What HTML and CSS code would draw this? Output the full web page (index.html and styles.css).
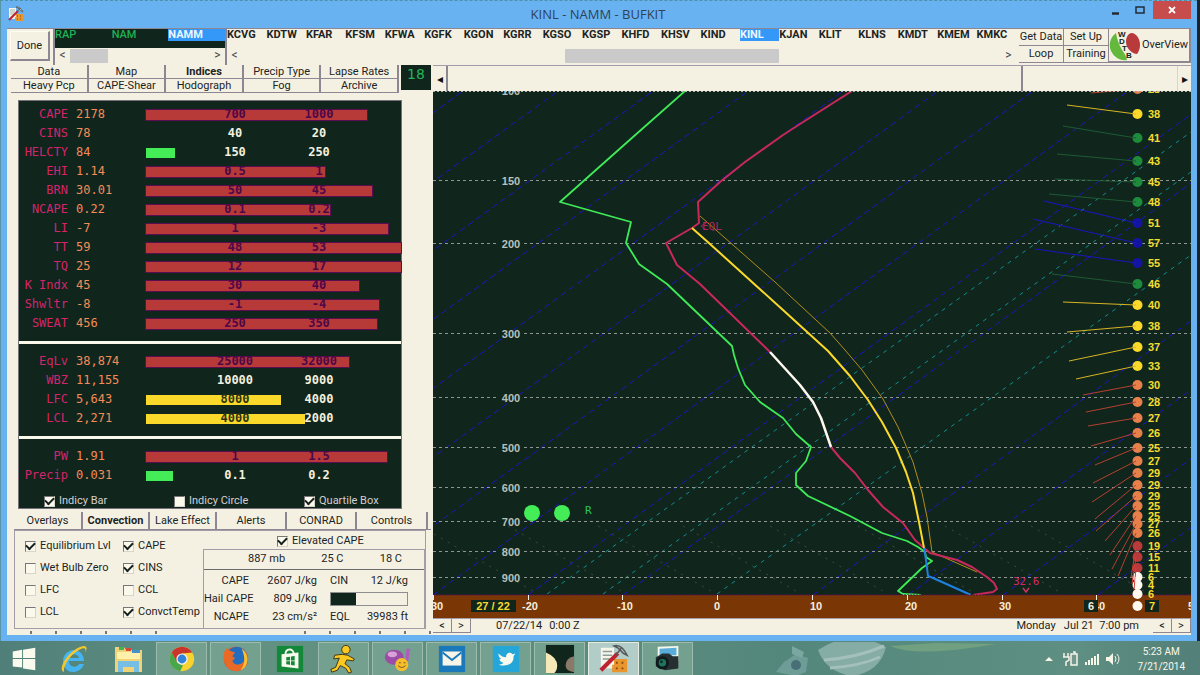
FILE: index.html
```html
<!DOCTYPE html>
<html lang="en">
<head>
<meta charset="utf-8">
<title>KINL - NAMM - BUFKIT</title>
<link rel="stylesheet" href="styles.css">
</head>
<body>
<main class="window">
  <header class="titlebar">
    <svg class="app-icon" viewBox="0 0 16 16" width="16" height="16"><use href="#tools"/></svg>
    <h1 class="title">KINL - NAMM - BUFKIT</h1>
    <div class="window-buttons">
      <button class="win-btn" aria-label="Minimize"><svg viewBox="0 0 10 10" width="10" height="10"><path d="M1 8.5h7" stroke="#222c38" stroke-width="2.5"/></svg></button>
      <button class="win-btn" aria-label="Maximize"><svg viewBox="0 0 10 10" width="10" height="10"><path d="M1 2h8v6H1z" fill="none" stroke="#222c38" stroke-width="1.5"/></svg></button>
      <button class="win-btn close" aria-label="Close"><svg viewBox="0 0 10 10" width="10" height="10"><path d="M2 2l6 6M8 2l-6 6" stroke="#fff" stroke-width="1.8"/></svg></button>
    </div>
  </header>

  <div class="client">
    <div class="topbar">
      <button class="raised done">Done</button>
      <div class="list models">
        <div class="list-items dark">
          <button>RAP</button><button>NAM</button><button class="selected">NAMM</button>
        </div>
        <div class="scroll"><span class="arrow">&lt;</span><span class="thumb"></span><span class="arrow">&gt;</span></div>
      </div>
      <div class="list stations">
        <div class="list-items">
          <button>KCVG</button><button>KDTW</button><button>KFAR</button><button>KFSM</button><button>KFWA</button><button>KGFK</button><button>KGON</button><button>KGRR</button><button>KGSO</button><button>KGSP</button><button>KHFD</button><button>KHSV</button><button>KIND</button><button class="selected">KINL</button><button>KJAN</button><button>KLIT</button><button>KLNS</button><button>KMDT</button><button>KMEM</button><button>KMKC</button>
        </div>
        <div class="scroll"><span class="arrow">&lt;</span><span class="thumb"></span><span class="arrow">&gt;</span></div>
      </div>
      <div class="actions">
        <button>Get Data</button><button>Set Up</button><button>Loop</button><button>Training</button>
      </div>
      <button class="overview">
        <svg viewBox="0 0 32 32" width="32" height="32">
          <circle cx="16" cy="16" r="15" fill="#f4f0df"/>
          <path d="M7 4A15 15 0 0 0 18 31c-1-4-2-6-5-10C10 16 8 10 7 4z" fill="#62b93c"/>
          <path d="M20 5c3-2 5-1 8 2 4 5 4 13 0 18-5 0-11-6-11-12 0-4 1-6 3-8z" fill="#b83a3a"/>
          <g font-family="Liberation Sans, sans-serif" font-weight="bold" font-size="8" fill="#10261c">
            <text x="9" y="8">W</text><text x="10" y="15">D</text><text x="13" y="22">T</text><text x="17" y="29">B</text>
          </g>
        </svg>
        <span>OverView</span>
      </button>
    </div>

    <div class="columns">
      <section class="left">
        <div class="tabs-row">
          <nav class="tabs">
            <button>Data</button><button>Map</button><button class="active">Indices</button><button>Precip Type</button><button>Lapse Rates</button>
            <button>Heavy Pcp</button><button>CAPE-Shear</button><button>Hodograph</button><button>Fog</button><button>Archive</button>
          </nav>
          <output class="counter">18</output>
        </div>

        <div class="indices">
          <table class="index-table">
            <colgroup><col class="col-name"><col class="col-value"><col></colgroup>
            <tbody id="group-stability"></tbody>
            <tbody id="group-levels"></tbody>
            <tbody id="group-moisture"></tbody>
          </table>
          <div class="index-options">
            <label><input type="checkbox" checked>Indicy Bar</label>
            <label><input type="checkbox">Indicy Circle</label>
            <label><input type="checkbox" checked>Quartile Box</label>
          </div>
        </div>

        <nav class="subtabs">
          <button>Overlays</button><button class="active">Convection</button><button>Lake Effect</button><button>Alerts</button><button>CONRAD</button><button>Controls</button>
        </nav>
        <div class="convection">
          <div class="layers">
            <label><input type="checkbox" checked>Equilibrium Lvl</label>
            <label><input type="checkbox" checked>CAPE</label>
            <label><input type="checkbox">Wet Bulb Zero</label>
            <label><input type="checkbox" checked>CINS</label>
            <label><input type="checkbox">LFC</label>
            <label><input type="checkbox">CCL</label>
            <label><input type="checkbox">LCL</label>
            <label><input type="checkbox" checked>ConvctTemp</label>
          </div>
          <div class="elevated">
            <label><input type="checkbox" checked>Elevated CAPE</label>
            <div class="parcel">
              <div class="parcel-head"><span>887 mb</span><span>25 C</span><span>18 C</span></div>
              <div class="parcel-body">
                <span>CAPE</span><span>2607 J/kg</span><span class="name">CIN</span><span>12 J/kg</span>
                <span>Hail CAPE</span><span>809 J/kg</span><div class="meter"><i></i></div>
                <span>NCAPE</span><span>23 cm/s²</span><span class="name">EQL</span><span>39983 ft</span>
              </div>
            </div>
          </div>
        </div>
        <div class="tick-rows"><i></i><i></i></div>
      </section>

      <section class="right">
        <div class="timebar">
          <button class="step" aria-label="Back">◂</button>
          <div class="time-track"></div>
          <div class="time-rest"></div>
          <button class="step" aria-label="Forward">▸</button>
        </div>
        <svg class="chart" viewBox="433 91 758 527" role="img" aria-label="Skew-T sounding">
          <rect x="433" y="91" width="758" height="527" fill="#10261c"/>
          <g id="grid"></g>
          <g fill="none" stroke-linejoin="round">
            <path stroke="#b08c1c" d="M700 216L733 245L775 282L830 333L845 350L862 370L883 399L898 427L913 462L922 493L927 517L932 552L977 572"/>
            <path stroke="#3fea58" stroke-width="1.8" d="M685 91L633 137L597 169L560 202L631 222L626 243L639 264L667 284L732 346L734 355L738 368L745 385L760 402L783 418L796 434L811 447L806 461L796 473V485L808 496L850 516L882 533L907 541L918 547L925 552L926 557L932 561L922 568L898 591L903 594L921 595"/>
            <path stroke="#c8285c" stroke-width="2" d="M852 91L800 124L783 135L745 162L720 182L698 202L699 223L692 228L666 243L677 265L700 284L770 352M831 447L840 458L855 473L868 490L883 507L903 523L915 540L930 553L957 560L972 567L987 577L994 583L997 589L993 592L973 595"/>
            <path stroke="#fbd92a" stroke-width="2" d="M692 228L710 244L783 310L828 351L850 376L868 400L882 422L896 448L906 472L913 493L919 522L924 548"/>
            <path stroke="#fff8ee" stroke-width="2.5" d="M770 352L800 385L813 402L821 418L831 447"/>
            <path stroke="#2080e0" stroke-width="2" d="M924 548L926 560L928 576L933 578L971 595"/>
          </g>
          <circle cx="532" cy="513" r="8" fill="#44ec58"/><circle cx="562" cy="513" r="8" fill="#44ec58"/>
          <text class="mono-mark" x="585" y="514" fill="#2ac45a">R</text>
          <path d="M706 223l-5 3 5 4" fill="none" stroke="#a8205c"/>
          <text class="mono-mark" x="702" y="230" fill="#b8205c">EQL</text>
          <text class="mono-mark" x="1013" y="585" fill="#d02868">32.6</text>
          <path d="M1023 588l3 4 3-4" fill="none" stroke="#d23460" stroke-width="1.5"/>
          <rect x="433" y="595" width="758" height="23" fill="#7b3606"/>
          <path d="M433 595h758" stroke="#5c104c" stroke-dasharray="2 1"/>
          <g id="axis"></g>
          <g id="winds"></g>
          <rect x="471" y="600" width="45" height="12" fill="#10261c"/>
          <text class="axis-text" x="493" y="610" fill="#fbd92a">27 / 22</text>
          <rect x="1084" y="600" width="14" height="12" fill="#10261c"/>
          <text class="axis-text" x="1091" y="610" fill="#f4f0df">6</text>
          <rect x="1145" y="600" width="14" height="12" fill="#10261c"/>
          <text class="axis-text" x="1152" y="610" fill="#fbd92a">7</text>
          <path d="M433 91.5h758" stroke="#b8b8b0" stroke-dasharray="2 2"/>
        </svg>
        <footer class="datebar">
          <button class="pager">&lt;</button><button class="pager">&gt;</button>
          <span class="utc">07/22/14</span><span class="utc-hour">0:00 Z</span>
          <span class="local">Monday &nbsp; Jul 21 &nbsp;7:00 pm</span>
          <button class="pager">&lt;</button><button class="pager">&gt;</button>
        </footer>
      </section>
    </div>
  </div>
</main>

<footer class="taskbar">
  <svg class="wallpaper" viewBox="0 0 250 34" width="250" height="34">
    <path d="M62 8Q95 -14 130 5Q124 30 96 34Q70 30 62 8z" fill="#86aca6"/>
    <path d="M68 18Q100 16 128 4M74 26Q104 24 124 15" stroke="#a3c0ba" stroke-width="3" fill="none"/>
    <path d="M134 4Q160 16 240 2L180 1z" fill="#70a080"/>
    <path d="M20 30L28 20 40 12 52 16 50 30 40 34z" fill="#6e9c96"/><path d="M36 4l12 6-2 6-10-4z" fill="#7ba7a1"/><circle cx="40" cy="23" r="5" fill="#486f77"/>
  </svg>
  <button class="task start" aria-label="Start"><svg viewBox="0 0 32 32" width="30" height="30"><path d="M4 8l10-2v9H4zM15 6l13-2v11H15zM4 16h10v9L4 24zM15 16h13v12l-13-2z" fill="#fbfaee"/></svg></button>
  <button class="task" aria-label="Internet Explorer"><svg viewBox="0 0 32 32" width="32" height="32"><path d="M26 18H11c0 7 8 7 10 3h5c-2 6-7 8-11 8-6 0-10-5-10-11S10 7 16 7s10 5 10 11zm-5-3c-1-5-9-5-10 0z" fill="#45b5f2"/><path d="M6 29C-1 27 9 9 22 4c7-3 8 1 5 6 2-5-1-6-6-3C12 12 5 23 6 29z" fill="#f6c72c"/></svg></button>
  <button class="task" aria-label="File Explorer"><svg viewBox="0 0 32 32" width="32" height="32"><path d="M3 4h9l2 3h16v22H3z" fill="#f1d376"/><path d="M5 9h23v7H5z" fill="#fff0ac"/><path d="M7 4h5v3H7z" fill="#40b45c"/><path d="M14 5h5v3h-5z" fill="#d74a38"/><path d="M20 7h8v3h-8z" fill="#4293cf"/><path d="M6 29V18h21v11h-5v-5H11v5z" fill="#77bee5"/></svg></button>
  <button class="task open" aria-label="Chrome"><svg viewBox="0 0 32 32" width="30" height="30"><circle cx="16" cy="16" r="13" fill="#f8d22e"/><path d="M5 9a13 13 0 0 1 22 0L16 10l-6 9z" fill="#c9352b"/><path d="M5 9l6 11 6 3-3 6A13 13 0 0 1 5 9z" fill="#47a84b"/><circle cx="16" cy="16" r="6" fill="#f4f4ee"/><circle cx="16" cy="16" r="4.7" fill="#3184da"/></svg></button>
  <button class="task open" aria-label="Firefox"><svg viewBox="0 0 32 32" width="30" height="30"><circle cx="16" cy="16" r="13" fill="#d84a27"/><circle cx="17" cy="13" r="10" fill="#226dc0"/><path d="M3 15C2 9 5 5 7 4c0 3 3 3 5 4l3 1-3 4 3 2-3 3c2 5 9 5 12 1 2-3 1-6 0-9 7 7 3 18-8 19C9 29 3 23 3 15z" fill="#e96a27"/><path d="M22 5c6 4 8 11 5 17-1 3-4 5-6 6 5-7 5-14 1-23z" fill="#f9bf33"/></svg></button>
  <button class="task" aria-label="Store"><svg viewBox="0 0 32 32" width="30" height="30"><path fill="#128838" d="M2 2h28v28H2z"/><path d="M7 11l18-2v17L7 24z" fill="#f7faed"/><path d="M11 12c0-8 9-8 9-1" fill="none" stroke="#f7faed" stroke-width="2"/><path d="M12 14l4-.5v4h-4zm5-.7 4-.5v4.7h-4zM12 18.5h4v3.500l-4-.5zm5 0h4V23l-4-.5z" fill="#128838"/></svg></button>
  <button class="task open" aria-label="AIM"><svg viewBox="0 0 32 32" width="30" height="30"><g stroke="#3c3014" fill="#fbc91f"><circle cx="18" cy="6" r="4.5"/><path d="M6 12l8-1 6 1 7 4-1 2-7-1-2 4 5 4 2 5-3 1-3-5-6-3-3 5-6 2-1-3 5-2 4-10-6 1z"/></g></svg></button>
  <button class="task open" aria-label="Messenger"><svg viewBox="0 0 32 32" width="30" height="30"><ellipse cx="12" cy="14" rx="10" ry="8" fill="#9b4ca6"/><ellipse cx="10" cy="11" rx="5" ry="3" fill="#d6a2d8"/><path d="M25 5h4l-2 13h-3z" fill="#b45abd"/><circle cx="20" cy="22" r="7" fill="#f6be2b"/><path d="M16 23q4 4 8 0M17 20h2M22 20h2" stroke="#72501a" fill="none"/></svg></button>
  <button class="task open" aria-label="Mail"><svg viewBox="0 0 32 32" width="30" height="30"><path fill="#1a79ba" d="M2 2h28v28H2z"/><path fill="#f8f5e8" d="M6 8h20v15H6z"/><path d="M6 9l10 8 10-8" fill="none" stroke="#1a79ba" stroke-width="2"/></svg></button>
  <button class="task open" aria-label="Twitter"><svg viewBox="0 0 32 32" width="30" height="30"><path fill="#24a6d8" d="M2 2h28v28H2z"/><path d="M8 10c3 3 5 4 8 4 0-5 5-6 7-3l3-1-2 3c1 7-6 12-16 9 3 0 5-1 5-2-3-1-4-3-4-4h2c-3-2-3-4-3-6z" fill="#f7faed"/></svg></button>
  <button class="task open" aria-label="Eclipse viewer"><svg viewBox="0 0 32 32" width="30" height="30"><path fill="#10261c" d="M1 1h30v30H1z"/><path d="M1 9q12 5 12 14 0 5-3 8H1z" fill="#f7e8b8"/><path d="M31 13q-9 2-9 10 0 6 9 7z" fill="#8a7968"/></svg></button>
  <button class="task open current" aria-label="BUFKIT"><svg viewBox="0 0 16 16" width="30" height="30"><g id="tools"><path d="M1 2h7v11H1z" fill="#f7f4e8"/><path d="M2 4h5M2 6h5M2 8h4" stroke="#8b9d9d" stroke-width=".7"/><path d="M8 8h7v7H7v-4h1z" fill="#e8962d"/><path d="M9 10h1m2 0h1m-4 3h1m2 0h1" stroke="#8b4710"/><path d="M1 14L10 5" stroke="#bd2430" stroke-width="2.2"/><path d="M9 6l3-4M8 1q4-1 7 5l-2-1-3-3z" stroke="#52595a" fill="#b6bcb8" stroke-width=".8"/></g></svg></button>
  <button class="task open" aria-label="Camera"><svg viewBox="0 0 32 32" width="30" height="30"><path d="M5 3l22-1v16H5z" fill="#f5f8ee"/><path d="M7 5l18-1v8H7z" fill="#59acd9"/><path d="M3 14l7-4h7l4 3h6v13l-14 2-10-4z" fill="#252f32"/><circle cx="10" cy="20" r="7" fill="#101a1c"/><circle cx="10" cy="20" r="4" fill="#1d7561"/><circle cx="9" cy="19" r="1.5" fill="#172427"/></svg></button>
  <div class="tray">
    <svg viewBox="0 0 76 16" width="76" height="16">
      <path d="M0 10l4-4 4 4z" fill="#f7f4e8"/>
      <path d="M19 2v4m4-4v4m-5 0h6v3l-3 2v4" fill="none" stroke="#f7f4e8" stroke-width="1.5"/><path d="M26 3h6v11h-6zM28 1h2v2" fill="#75968d" stroke="#f7f4e8" stroke-width="1.5"/>
      <path d="M41 14v-3M44 14V9M47 14V7M50 14V5M53 14V3" stroke="#f7f4e8" stroke-width="2"/>
      <path d="M61 6h3l4-4v12l-4-4h-3z" fill="#f7f4e8"/><path d="M70 5q2 3 0 6M72 3q4 5 0 10" fill="none" stroke="#f7f4e8"/>
    </svg>
    <div class="clock"><span>5:23 AM</span><span>7/21/2014</span></div>
  </div>
</footer>
<script src="app.js"></script>
</body>
</html>
```

FILE: styles.css
```css
* { box-sizing: border-box; }

:root {
  --face: #f5f1e2;
  --dark: #10261c;
  --edge: #8d8794;
  --sky: #68b2f2;
  --select: #3498f8;
}

body {
  margin: 0;
  min-height: 100vh;
  display: flex;
  flex-direction: column;
  background: #17242c;
  color: #1c2424;
  font: 11px/14px Roboto, "Liberation Sans", sans-serif;
}

button {
  margin: 0;
  padding: 0;
  border: 0;
  background: none;
  color: inherit;
  font: inherit;
  white-space: nowrap;
}

.window {
  flex: 1;
  margin-right: 3px;
  padding: 0 6px 6px 7px;
  background: var(--sky);
  border-top: 1px dashed #4e93a4;
  box-shadow: inset 1px 0 #5794a4;
}

.titlebar { display: flex; align-items: flex-start; height: 27px; }
.app-icon { margin: 5px 0 0 1px; }
.title {
  flex: 1;
  margin: 0;
  padding-left: 68px;
  text-align: center;
  color: #2e4356;
  font: 13px/26px "Open Sans", "Noto Sans", sans-serif;
}
.window-buttons { display: flex; }
.win-btn { width: 24px; height: 18px; display: grid; place-items: center; }
.win-btn.close { width: 38px; margin-left: 1px; background: #c74d4d; }

.client { background: var(--face); border-top: 1px solid var(--edge); }

/* top strip */
.topbar { display: flex; height: 36px; }
.raised { border: 1px solid #fffdf2; border-right: 2px solid var(--edge); border-bottom: 2px solid var(--edge); }
.done { width: 40px; height: 30px; margin: 2px 3px 0 3px; }
.list { display: flex; flex-direction: column; border-left: 2px solid var(--edge); }
.models { width: 172px; }
.stations { flex: 1; margin-right: 3px; }
.list-items { display: flex; align-items: flex-start; height: 19px; font-weight: bold; }
.list-items button { flex: 1; text-align: left; line-height: 12px; }
.list-items .selected { background: var(--select); color: #eef6ff; }
.list-items.dark { background: var(--dark); color: #1fb055; font-weight: 500; }
.list-items.dark .selected { font-weight: bold; }
.scroll { display: flex; height: 14px; margin-top: 1px; }
.arrow { width: 15px; text-align: center; font-size: 12px; line-height: 13px; color: #414848; }
.thumb { background: #cacaca; }
.models .thumb { width: 38px; margin-right: auto; }
.stations .thumb { width: 27%; margin: 0 auto 0 41%; }
.actions { display: grid; grid-template-columns: 45px 45px; grid-template-rows: 17px 17px; }
.actions button { border-right: 1px solid var(--edge); border-bottom: 1px solid var(--edge); }
.overview { display: flex; align-items: center; width: 82px; height: 34px; border-right: 2px solid var(--edge); border-bottom: 2px solid var(--edge); }
.overview span { flex: 1; text-align: center; }

.columns { display: grid; grid-template-columns: 424px minmax(0, 1fr); column-gap: 2px; padding-bottom: 1px; }

/* left side */
.tabs-row { display: flex; align-items: flex-start; padding-left: 4px; }
.tabs { flex: 1; display: grid; grid-template-columns: repeat(5, 1fr); }
.tabs button { height: 14px; line-height: 13px; border-right: 2px solid var(--edge); border-bottom: 1px solid var(--edge); }
.active { font-weight: bold; }
.counter {
  width: 30px;
  height: 25px;
  margin-left: 2px;
  background: var(--dark);
  color: #24b45a;
  font: 14px/18px "DejaVu Sans", sans-serif;
  text-align: center;
}

.indices {
  width: 384px;
  margin: 7px 0 0 11px;
  border: 1px solid #77717c;
  background: var(--dark);
}
.index-table {
  width: 100%;
  border-collapse: collapse;
  table-layout: fixed;
  font: bold 12px/19px "DejaVu Sans Mono", monospace;
}
.col-name { width: 49px; }
.col-value { width: 78px; }
.index-table th, .index-table td { padding: 0; height: 19px; }
.index-table th { text-align: right; font-weight: normal; color: #d4246c; white-space: pre; }
.index-table .value { padding-left: 8px; font-weight: normal; color: #f48c58; }
.index-table tbody::before, .index-table tbody::after { content: ""; display: table-row; height: 4px; }
.index-table tbody::after { height: 9px; }
.index-table tbody + tbody { border-top: 3px solid #fbf8ec; }
.index-table tbody + tbody::before { height: 10px; }
.track { display: grid; grid-template-columns: 47px 84px 84px 1fr; align-items: center; color: #f4f0df; }
.bar { grid-area: 1 / 1 / 2 / -1; height: 10px; }
.bar.red { background: #b83a38; box-shadow: 0 0 0 1px #5c0c50; }
.bar.green { background: #44ec58; }
.bar.yellow { background: #fbd92a; }
.low, .high { grid-row: 1; text-align: center; }
.low { grid-column: 2; }
.high { grid-column: 3; }
.on-red { color: #4e0748; }
.on-yellow { color: #2d3414; }

label { display: flex; align-items: center; gap: 4px; white-space: nowrap; }
input[type="checkbox"] {
  appearance: none;
  width: 11px;
  height: 11px;
  margin: 0;
  background: #fbf8ec;
  border: 1px solid #77777a;
  border-right-color: #d8d4c8;
  border-bottom-color: #d8d4c8;
  display: grid;
  place-items: center;
}
input[type="checkbox"]:checked::after {
  content: "";
  width: 7px;
  height: 4px;
  margin-top: -2px;
  border: solid #16201c;
  border-width: 0 0 2px 2px;
  transform: rotate(-45deg);
}
.index-options { display: grid; grid-template-columns: repeat(3, 130px); padding-left: 25px; color: #d7cdd2; height: 14px; }

.subtabs { display: grid; grid-template-columns: 69px 67px 67px 70px 70px 71px; margin: 3px 0 0 7px; border-bottom: 1px solid var(--edge); }
.subtabs button { height: 17px; line-height: 16px; border-right: 2px solid var(--edge); }
.convection { display: flex; margin: 0 5px 0 7px; border: 1px solid #a49ca8; }
.layers { flex: 1; display: grid; grid-template-columns: 98px 1fr; grid-auto-rows: 22px; padding: 4px 0 4px 10px; }
.elevated { width: 222px; }
.elevated > label { padding: 3px 0 1px 74px; }
.parcel { border: 1px solid #a49ca8; border-bottom: 0; }
.parcel-head { display: flex; justify-content: space-between; padding: 2px 22px 3px 44px; border-bottom: 1px solid #686a6c; }
.parcel-body {
  display: grid;
  grid-template-columns: 45px 68px 32px 59px;
  grid-auto-rows: 18px;
  align-items: center;
  padding: 2px 0;
  text-align: right;
  white-space: nowrap;
}
.parcel-body .name { padding-left: 13px; text-align: left; }
.meter { grid-column: 3 / 5; margin-left: 13px; height: 14px; border: 1px solid #8e8e90; }
.meter i { display: block; width: 33%; height: 100%; background: var(--dark); }
.tick-rows { display: flex; justify-content: space-between; padding-top: 2px; }
.tick-rows i { width: 150px; height: 3px; background: repeating-linear-gradient(90deg, transparent 0 23px, #77777a 23px 25px); }

/* right side */
.timebar { display: flex; height: 26px; border-top: 1px solid #a49ca8; }
.step { width: 13px; font-size: 12px; color: #111; }
.time-track { flex: 1; border-left: 2px solid var(--edge); }
.time-rest { width: 157px; border-left: 2px solid var(--edge); border-right: 1px solid #d8d4c8; }
.chart { display: block; width: 100%; height: auto; }
.p-label { font: bold 11px "Liberation Sans", sans-serif; text-anchor: middle; fill: #b8c0ba; }
.axis-text { font: bold 11px "Liberation Sans", sans-serif; text-anchor: middle; }
.wind-text { font: bold 11px "Liberation Sans", sans-serif; fill: #f4dc30; }
.mono-mark { font: 11px "DejaVu Sans Mono", monospace; }
.datebar { display: flex; align-items: center; height: 15px; border-top: 1px solid #a49ca8; }
.pager { width: 19px; height: 14px; border-right: 1px solid var(--edge); border-bottom: 1px solid var(--edge); line-height: 12px; }
.utc { margin-left: 25px; }
.utc-hour { margin-left: 7px; }
.local { margin-left: auto; margin-right: 14px; }

/* taskbar */
.taskbar {
  position: relative;
  display: flex;
  align-items: center;
  height: 35px;
  padding-left: 2px;
  background: linear-gradient(90deg, #4f7f78, #639282 20%, #598a7e 55%, #54877c 65%, #5e8f82 90%, #527f78);
}
.wallpaper { position: absolute; left: 63%; bottom: 0; }
.task { width: 51px; height: 34px; margin-right: 3px; display: grid; place-items: center; }
.task.start { width: 43px; }
.task.open { background: #74a08f; border: 1px solid #9cbcae; }
.task.current { background: #b2ccc8; border-color: #e4ece4; }
.tray { position: relative; margin-left: auto; display: flex; align-items: center; gap: 16px; padding-right: 15px; color: #fbf8ec; }
.clock { display: grid; text-align: center; font-size: 10px; line-height: 15px; }
```

FILE: app.js
```javascript
// Index rows: name, value, bar colour, bar width %, low threshold, high threshold
const groups = {
  "group-stability": [
    ["CAPE", "2178", "red", 86.5, "700", "1000"],
    ["CINS", "78", "", 0, "40", "20"],
    ["HELCTY", "84", "green", 11.5, "150", "250"],
    ["EHI", "1.14", "red", 70, "0.5", "1"],
    ["BRN", "30.01", "red", 88.5, "50", "45"],
    ["NCAPE", "0.22", "red", 72, "0.1", "0.2"],
    ["LI", "-7", "red", 95, "1", "-3"],
    ["TT", "59", "red", 100, "48", "53"],
    ["TQ", "25", "red", 100, "12", "17"],
    ["K Indx", "45", "red", 83.5, "30", "40"],
    ["Shwltr", "-8", "red", 91.5, "-1", "-4"],
    ["SWEAT", "456", "red", 90.5, "250", "350"]
  ],
  "group-levels": [
    ["EqLv", "38,874", "red", 79.5, "25000", "32000"],
    ["WBZ", "11,155", "", 0, "10000", "9000"],
    ["LFC", "5,643", "yellow", 53, "8000", "4000"],
    ["LCL", "2,271", "yellow", 62.5, "4000", "2000"]
  ],
  "group-moisture": [
    ["PW", "1.91", "red", 94.5, "1", "1.5"],
    ["Precip", "0.031", "green", 10.5, "0.1", "0.2"]
  ]
};
for (const [id, rows] of Object.entries(groups)) {
  document.getElementById(id).innerHTML = rows.map(([name, value, colour, width, low, high]) => {
    const cover = at => (width > at && colour ? "on-" + colour : "");
    const bar = colour ? `<i class="bar ${colour}" style="width:${width}%"></i>` : "";
    return `<tr><th scope="row">${name}</th><td class="value">${value}</td><td><div class="track">${bar}<span class="low ${cover(35)}">${low}</span><span class="high ${cover(67)}">${high}</span></div></td></tr>`;
  }).join("");
}

// Chart grid: isotherms (the 0 degree one is drawn with the teal lines)
let grid = "";
for (let k = -7; k < 8; k++) {
  if (k === 3) continue;
  const x = 433 + 95 * k;
  grid += `<path d="M${x} 595l720 -522" stroke="#1c14c4" stroke-dasharray="6 4"/>`;
}
[[547, 594, 1191, 132], [603, 594, 1191, 172], [717, 594, 1191, 255]].forEach(([a, b, c, d]) => {
  grid += `<path d="M${a} ${b}L${c} ${d}" stroke="#128c90" stroke-dasharray="4 5"/>`;
});
[420, 508, 598, 683, 770, 858, 945, 1031].forEach(x => {
  grid += `<path d="M${x} 526l118 68" stroke="#3c4a42" stroke-dasharray="2 6"/>`;
});
[[150, 181], [200, 244], [300, 334], [400, 398], [500, 448], [600, 488], [700, 522], [800, 552], [900, 578]].forEach(([p, y]) => {
  grid += `<path d="M433 ${y - 0.5}H497M524 ${y - 0.5}H1191" stroke="#8d9690" stroke-dasharray="3 3"/><text class="p-label" x="511" y="${y + 4}">${p}</text>`;
});
grid += `<text class="p-label" x="511" y="95">100</text>`;
document.getElementById("grid").innerHTML = grid;

// Temperature axis
document.getElementById("axis").innerHTML =
  [["30", 437, 433], ["-20", 530, 528], ["-10", 625, 622], ["0", 717, 717], ["10", 816, 812], ["20", 911, 907], ["30", 1005, 1002], ["40", 1099, 1096], ["50", 1194, 1191]]
    .map(([t, x, tick]) => `<path d="M${tick + 0.5} 595v5" stroke="#f4f0df"/><text class="axis-text" x="${x}" y="610" fill="#f4f0df">${t}</text>`).join("");

// Wind levels: y, speed, colour, barb end x, barb end y
const Y = "#fbd92a", G = "#1d8a3c", B = "#1414a4", O = "#e8804c", R = "#b83a3a", W = "#fff8ee";
const winds = [
  [89, 28, O, 1091, 93], [114, 38, Y, 1067, 105], [138, 41, G, 1063, 126], [161, 43, G, 1057, 154],
  [182, 45, G, 1055, 179], [202, 48, G, 1049, 194], [223, 51, B, 1044, 201], [243, 57, B, 1033, 219],
  [263, 55, B, 1035, 249], [284, 46, G, 1052, 274], [305, 40, Y, 1063, 302], [326, 38, Y, 1067, 332],
  [347, 37, Y, 1069, 361], [366, 33, Y, 1076, 379], [385, 30, O, 1083, 395], [402, 28, O, 1086, 412],
  [418, 27, O, 1088, 426], [433, 26, O, 1091, 446], [448, 25, O, 1095, 465], [461, 27, O, 1093, 483],
  [473, 29, O, 1092, 502], [485, 29, O, 1095, 519], [496, 29, O, 1096, 531], [506, 25, O, 1105, 541],
  [516, 25, O, 1110, 555], [524, 27, O, 1112, 569], [533, 26, O, 1118, 576], [546, 19, R, 1131, 578],
  [557, 15, R, 1132, 584], [568, 11, R, 1134, 590], [577, 6, W, 1136, 582], [585, 4, W, 1137, 589],
  [594, 6, W, 1137, 596], [606, "", W, 1137, 606]
];
const barb = { [Y]: "#d8b424", [G]: "#1d5a34", [B]: "#1c14c4", [O]: "#b44030", [R]: "#d03c38", [W]: W };
document.getElementById("winds").innerHTML =
  winds.map(([y, s, c]) => `<circle cx="1137.5" cy="${y}" r="5" fill="${c}"/><text class="wind-text" x="1148" y="${y + 4}">${s}</text>`).join("") +
  winds.map(([y, s, c, x2, y2]) => `<path d="M1136 ${y}L${x2} ${y2}" stroke="${barb[c]}"/>`).join("");
```
